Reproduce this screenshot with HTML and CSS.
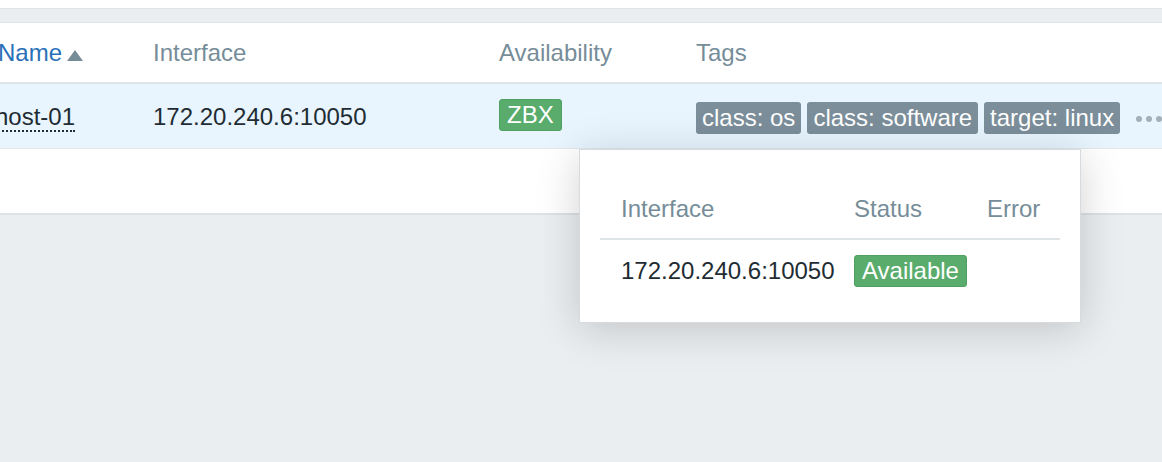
FILE: index.html
```html
<!DOCTYPE html>
<html lang="en">
<head>
<meta charset="utf-8">
<title>Hosts</title>
<link rel="stylesheet" href="styles.css">
</head>
<body>
<div class="topgap"></div>
<div class="band"></div>
<div class="list">
  <div class="row head">
    <div class="cell c1"><a class="sort">Name</a><span class="arrow"></span></div>
    <div class="cell c2">Interface</div>
    <div class="cell c3">Availability</div>
    <div class="cell c4">Tags</div>
  </div>
  <div class="row data">
    <div class="cell c1"><span class="host">host-01</span></div>
    <div class="cell c2">172.20.240.6:10050</div>
    <div class="cell c3"><span class="badge green">ZBX</span></div>
    <div class="cell c4 tags">
      <span class="tag">class: os</span>
      <span class="tag">class: software</span>
      <span class="tag">target: linux</span>
      <span class="more"><i></i><i></i><i></i></span>
    </div>
  </div>
  <div class="empty"></div>
</div>
<div class="hint">
  <div class="hrow hhead">
    <div class="hcell">Interface</div>
    <div class="hcell">Status</div>
    <div class="hcell">Error</div>
  </div>
  <div class="hrow hdata">
    <div class="hcell">172.20.240.6:10050</div>
    <div class="hcell"><span class="badge green avail">Available</span></div>
    <div class="hcell"></div>
  </div>
</div>
</body>
</html>
```

FILE: styles.css
```css
html, body {
  margin: 0;
  padding: 0;
}
body {
  background: #ebeef0;
  font-family: "Liberation Sans", Arial, sans-serif;
  font-size: 24px;
  line-height: 28px;
  color: #1f2c33;
  overflow: hidden;
  height: 462px;
  position: relative;
}
.topgap {
  height: 8px;
  background: #ffffff;
}
.band {
  height: 13px;
  background: #ebeef0;
  border-top: 1px solid #dfe4e7;
  border-bottom: 1px solid #dfe4e7;
}
.list {
  background: #ffffff;
  margin-left: -2px;
}
.row {
  display: grid;
  grid-template-columns: 155px 346px 197px 1fr;
}
.head {
  height: 59px;
  border-bottom: 2px solid #dfe4e7;
  color: #768d99;
  align-items: start;
}
.head .cell {
  padding-top: 16px;
  white-space: nowrap;
}
.sort {
  color: #2a70b8;
}
.arrow {
  display: inline-block;
  width: 0;
  height: 0;
  margin-left: 5px;
  border-left: 8px solid transparent;
  border-right: 8px solid transparent;
  border-bottom: 11px solid #768d99;
  vertical-align: 0;
}
.data {
  height: 64px;
  background: #e8f5ff;
  border-bottom: 1px solid #e3e8eb;
  align-items: center;
}
.data .cell {
  white-space: nowrap;
}
.data .c1, .data .c2 {
  padding-top: 2px;
}
.host {
  margin-left: -3px;
  border-bottom: 2px dotted #1f2c33;
}
.badge {
  display: inline-block;
  line-height: 30px;
  padding: 0 7px;
  border-radius: 3px;
  color: #ffffff;
  vertical-align: middle;
}
.green {
  background: #59ac6b;
  border: 1px solid #50a062;
}
.c3 .badge {
  margin-top: -2px;
}
.tags {
  display: flex;
  align-items: center;
  gap: 6px;
  margin-top: 3px;
}
.tag {
  display: inline-block;
  background: #7b8e9a;
  color: #ffffff;
  line-height: 32px;
  padding: 0 6px;
  border-radius: 3px;
}
.more {
  display: inline-flex;
  gap: 4px;
  margin-left: 10px;
  margin-top: 2px;
}
.more i {
  display: block;
  width: 6px;
  height: 6px;
  border-radius: 50%;
  background: #a3b0b9;
}
.empty {
  height: 64px;
  border-bottom: 2px solid #dde2e5;
}
.hint {
  position: absolute;
  left: 579px;
  top: 149px;
  width: 502px;
  height: 174px;
  box-sizing: border-box;
  background: #ffffff;
  border: 1px solid #d6dbdf;
  padding: 0 20px;
  box-shadow: 0 6px 40px rgba(0, 0, 0, 0.18);
}
.hrow {
  display: grid;
  grid-template-columns: 233px 133px 1fr;
}
.hhead {
  padding-top: 45px;
  padding-bottom: 15px;
  border-bottom: 2px solid #dfe4e7;
  color: #768d99;
}
.hdata {
  padding-top: 15px;
  align-items: center;
}
.hcell {
  padding-left: 21px;
  white-space: nowrap;
}
.avail {
  padding: 0 7px;
}
```
